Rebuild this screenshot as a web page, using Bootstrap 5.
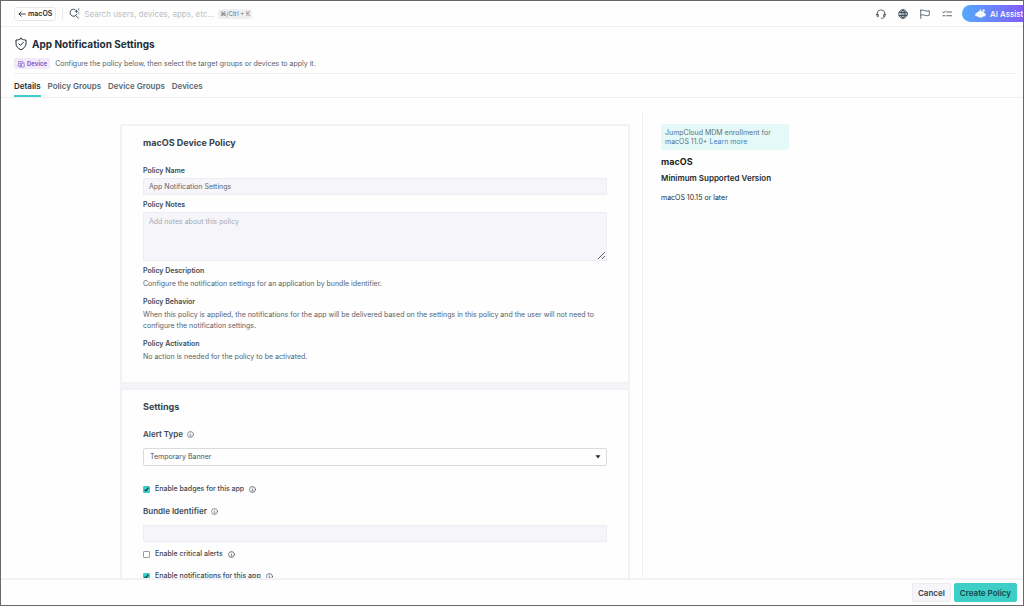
<!DOCTYPE html>
<html lang="en">
<head>
<meta charset="utf-8">
<meta name="viewport" content="width=device-width, initial-scale=1">
<title>App Notification Settings</title>
<link href="https://cdn.jsdelivr.net/npm/bootstrap@5.3.0/dist/css/bootstrap.min.css" rel="stylesheet">
<style>
  :root { --ink: #202d38; --body: #56626c; --strong: #3d4c57; --line: #efeff1; --field: #f5f5fa; --teal: #3dcec8; }
  body { font-family: Inter, sans-serif; font-size: 7px; line-height: 10px; color: var(--body); background: #fefefe; }
  svg { display: block; flex: none; fill: none; stroke: currentColor; stroke-linecap: round; stroke-linejoin: round; }
  .shell { height: 100vh; border: 1px solid #68686b; overflow: hidden; }

  .topbar { height: 26px; padding-left: 13px; border-bottom: 1px solid var(--line); color: var(--strong); }
  .back-btn { height: 14px; gap: 2px; padding: 0 3px; font-size: 7px; line-height: 10px; font-weight: 600; color: var(--ink); background: #fff; border: 1px solid #e6e7ea; border-radius: 3px; }
  .rule { width: 1px; height: 13px; margin: 0 6px; background: #e9e9ec; }
  .search-box { width: 130px; height: 14px; padding: 0; font-size: 8px; border: 0; background: transparent; color: var(--ink); outline: 0; }
  .search-box::placeholder { color: #b9bec3; opacity: 1; }
  .keys { padding: 0 2px; font: 6px/10px Inter, sans-serif; color: #68737c; background: #eeeff2; border-radius: 2px; }
  .tools { gap: 12px; margin-right: 10px; }
  .tool-btn { padding: 0; border: 0; background: none; color: var(--strong); }
  .ai-btn { height: 17px; width: 72px; margin-right: -11px; padding: 0 0 0 13px; font-size: 8px; line-height: 10px; font-weight: 500; color: #fff; border: 0; border-radius: 9px 0 0 9px; background: linear-gradient(90deg, #54a9fb, #7f62f8 80%); }

  .page-head { padding: 10px 6px 0 13px; }
  .page-title { font-size: 10px; line-height: 14px; font-weight: 700; color: var(--ink); }
  .device-tag { height: 11px; gap: 2px; padding: 0 3px; font-size: 6px; font-weight: 700; color: #8a5fc0; background: #f1eafb; border-radius: 2px; }
  .head-sub { gap: 5px; padding: 7px 0 4px; border-bottom: 1px solid var(--line); }
  .tab-bar { height: 24px; padding-left: 13px; gap: 7px; border-bottom: 1px solid var(--line); }
  .tab-bar .nav-link { padding: 7px 0 5px; font-size: 8px; line-height: 10px; font-weight: 600; color: #5a6771; border-bottom: 2px solid transparent; }
  .tab-bar .nav-link.active { color: var(--ink); border-color: var(--teal); }

  .scroller { min-height: 0; overflow-y: auto; scrollbar-width: none; }
  .scroller::-webkit-scrollbar { display: none; }
  .content { max-width: 784px; padding-top: 13px; }
  .panels { flex: 0 1 523px; padding: 13px 12px 0 0; border-right: 1px solid var(--line); }
  .stack { background: #f4f4f9; border-radius: 3px; }
  .panel { padding: 11px 21px 20px; background: #fefefe; border: 2px solid #f2f2f6; border-radius: 3px; }
  h2 { margin: 0; font-size: 9px; line-height: 12px; font-weight: 700; color: #34424d; }
  .label-s { display: block; margin: 0; font-size: 7px; line-height: 10px; font-weight: 600; color: var(--strong); }
  .label-m { font-size: 8px; line-height: 10px; font-weight: 600; color: var(--strong); }
  .form-control, .form-select { height: 17px; padding: 0 5px; font-size: 7px; line-height: 10px; color: #5a656e; background-color: var(--field); border: 1px solid #ececf1; border-radius: 1px; }
  textarea.form-control { height: 49px; min-height: 0; padding: 4px 5px; }
  .form-control::placeholder { color: #a4abb1; }
  .form-select { height: 18px; padding: 0 16px 0 6px; color: #47545e; border-color: #d9dbde; border-radius: 2px; background: #fefefe url("data:image/svg+xml,%3Csvg xmlns='http://www.w3.org/2000/svg' viewBox='0 0 6 4'%3E%3Cpath d='M.5.3h5L3 3.6z' fill='%23202d38'/%3E%3C/svg%3E") no-repeat right 5px center / 6px 4px; }
  .policy .form-control { margin: 2px 0 5px; }
  .policy .label-s:first-of-type { margin-top: 17px; }
  .policy dt.label-s:first-of-type { margin-top: 0; }
  .settings .form-select, .settings .form-control { margin-top: 9px; }
  .settings .form-select + .tick { margin-top: 18px; }
  .settings .tick + div { margin-top: 12px; }
  .settings .form-control + .tick { margin-top: 7px; }
  .tick { gap: 5px; height: 10px; font-size: 7px; font-weight: 500; color: #3b4852; }
  .tick .form-check-input { width: 7px; height: 7px; margin: 0; border: 1px solid #999fa4; border-radius: 1px; background-size: 7px 7px; background-position: center; }
  .tick .form-check-input:checked { border-color: var(--teal); background-color: var(--teal); background-image: url("data:image/svg+xml,%3Csvg xmlns='http://www.w3.org/2000/svg' viewBox='0 0 7 7'%3E%3Cpath d='M1.6 3.7l1.3 1.2 2.5-3.2' fill='none' stroke='%23163a40' stroke-width='1.2'/%3E%3C/svg%3E"); }
  dl, dd { margin: 0; }
  dd { line-height: 11px; padding-top: 2px; margin-bottom: 8px; }

  .aside { padding: 13px 0 0 18px; color: #26292c; }
  .notice { width: 128px; padding: 4px; line-height: 9px; color: #5d7078; background: #e5f9f9; border-radius: 3px; margin-bottom: 6px; }
  .notice a { color: #3b82bd; text-decoration: none; }
  .aside h2 { color: #1b1e21; }
  .version { margin: 5px 0 10px; }
  .foot { height: 27px; padding-right: 6px; gap: 3px; border-top: 2px solid #f2f2f5; }
  .foot .btn { height: 19px; padding: 0 5px; font-size: 8px; line-height: 10px; font-weight: 600; border-radius: 2px; border: 1px solid #ebebf0; color: #35434e; background: #f5f5fa; }
  .foot .btn.create { color: #17464f; background: var(--teal); border-color: var(--teal); }
</style>
</head>
<body>
<svg width="0" height="0" class="position-absolute" aria-hidden="true">
  <symbol id="info" viewBox="0 0 14 14"><circle cx="7" cy="7" r="6" stroke-width="1.300"/><path d="M6 6.500h1.200V10M5.600 10h3" stroke-width="1"/><circle cx="7" cy="4" r=".5" stroke-width=".5"/></symbol>
</svg>
<div class="shell d-flex flex-column">
  <header class="topbar d-flex align-items-center flex-shrink-0">
    <button class="back-btn d-flex align-items-center" type="button">
      <svg width="8" height="8" viewBox="0 0 16 16" stroke-width="1.800"><path d="M14.500 8H2M6.500 3.500L2 8l4.500 4.500"/></svg>macOS
    </button>
    <div class="rule"></div>
    <svg width="11" height="11" viewBox="0 0 22 22" stroke-width="1.900"><path d="M11.500 3A7 7 0 1 0 15.500 12.500M14 15.500l5 5"/><path d="M15 2l1.100 3.300L19.500 6.500l-3.400 1.200L15 11l-1.200-3.300L10.500 6.500l3.300-1.200z" fill="currentColor" stroke="none"/><path d="M19.500 1v3M19.500 9.500v2" stroke-width="1.300"/></svg>
    <input class="search-box ms-1" type="text" aria-label="Search" placeholder="Search users, devices, apps, etc...">
    <kbd class="keys ms-1">⌘/Ctrl + K</kbd>
    <div class="d-flex align-items-center ms-auto">
      <div class="tools d-flex align-items-center">
        <button class="tool-btn" type="button" aria-label="Support"><svg width="10" height="10" viewBox="0 0 20 20" stroke-width="1.600"><path d="M2.200 12V9.500a7.800 7.800 0 0 1 15.600 0V12M2 10.500h2.600v5H3.500A1.500 1.500 0 0 1 2 14v-3.500zM18 10.500h-2.600v5h1.100A1.500 1.500 0 0 0 18 14v-3.500zM16.500 15.500c0 2-1.500 3-4 3h-2"/></svg></button>
        <button class="tool-btn" type="button" aria-label="Language"><svg width="10" height="10" viewBox="0 0 20 20" stroke-width="1.900"><circle cx="10" cy="10" r="8.500"/><ellipse cx="10" cy="10" rx="4" ry="8.500"/><path d="M2.500 7h15M2.500 13h15M10 1.500v17"/></svg></button>
        <button class="tool-btn" type="button" aria-label="Announcements"><svg width="10" height="10" viewBox="0 0 20 20" stroke-width="1.600"><path d="M1.500 19V1.500M1.500 3c3.500-1.800 5.500-1 8.500.3s5 1.200 8.500 0v9.200c-3.500 1.300-5.500 1.200-8.500 0s-5-1.200-8.500 0"/></svg></button>
        <button class="tool-btn" type="button" aria-label="Tasks"><svg width="10" height="10" viewBox="0 0 20 20" stroke-width="1.700"><path d="M9.500 6h9.500M9.500 13.500h9.500M1.500 6L3.500 7.800 7 4M2 13.500h4"/></svg></button>
      </div>
      <button class="ai-btn d-flex align-items-center gap-1" type="button">
        <svg width="11" height="9" viewBox="0 0 22 18" stroke="none"><path fill="#fff" d="M10.500 4.500V1h1.200v3.500c3.300.2 5.600 1.700 6.300 4 2.300.2 3.500 1.500 3.500 3.200S20 14 17.500 14c-1.500 1.800-3.800 2.500-6.500 2.500S6 15.800 4.500 14C2 14 .5 13.500.5 11.700S1.700 8.700 4 8.500c.7-2.300 3.200-3.800 6.500-4zM17.500.5l.7 1.900 1.800.6-1.800.7-.7 1.800-.7-1.800L15 3l1.800-.6z"/><circle cx="8" cy="10.500" r="1.200" fill="#5b95fa"/><circle cx="14" cy="10.500" r="1.200" fill="#5b95fa"/></svg>AI Assist
      </button>
    </div>
  </header>

  <div class="page-head flex-shrink-0">
    <div class="d-flex align-items-center">
      <svg width="14" height="14" viewBox="0 0 28 28" stroke-width="2" style="color:#202d38"><path d="M14 3c3.500 2.500 6 3 10 3v7.500c0 5.500-4.500 9.500-10 12-5.500-2.500-10-6.500-10-12V6c4 0 6.500-.5 10-3z"/><path d="M10 13.800l3 3 5.500-6"/></svg>
      <h1 class="page-title ms-1 mb-0">App Notification Settings</h1>
    </div>
    <div class="head-sub d-flex align-items-center">
      <span class="device-tag d-inline-flex align-items-center"><svg width="8" height="8" viewBox="0 0 16 16" stroke-width="1.300"><path d="M3 9V3h8.500v2M1 11.500h6M9.500 6.500h5V14h-5zM5 6.500h2.500V14H5"/></svg>Device</span>
      <span>Configure the policy below, then select the target groups or devices to apply it.</span>
    </div>
  </div>
  <nav class="tab-bar nav flex-nowrap flex-shrink-0">
    <a class="nav-link active" href="#details">Details</a>
    <a class="nav-link" href="#policy-groups">Policy Groups</a>
    <a class="nav-link" href="#device-groups">Device Groups</a>
    <a class="nav-link" href="#devices">Devices</a>
  </nav>

  <main class="scroller flex-grow-1">
    <div class="content d-flex mx-auto">
      <div class="panels">
        <div class="stack d-flex flex-column gap-1">
          <section class="panel policy">
            <h2>macOS Device Policy</h2>
            <label class="label-s" for="pname">Policy Name</label>
            <input class="form-control" id="pname" value="App Notification Settings">
            <label class="label-s" for="pnotes">Policy Notes</label>
            <textarea class="form-control" id="pnotes" placeholder="Add notes about this policy"></textarea>
            <dl>
              <dt class="label-s">Policy Description</dt>
              <dd>Configure the notification settings for an application by bundle identifier.</dd>
              <dt class="label-s">Policy Behavior</dt>
              <dd>When this policy is applied, the notifications for the app will be delivered based on the settings in this policy and the user will not need to configure the notification settings.</dd>
              <dt class="label-s">Policy Activation</dt>
              <dd class="mb-0">No action is needed for the policy to be activated.</dd>
            </dl>
          </section>
          <section class="panel settings">
            <h2>Settings</h2>
            <div class="d-flex align-items-center gap-1 mt-3"><label class="label-m" for="alert">Alert Type</label><svg width="7" height="7"><use href="#info"/></svg></div>
            <select class="form-select" id="alert"><option>Temporary Banner</option><option>Alert</option><option>None</option></select>
            <div class="tick d-flex align-items-center"><input class="form-check-input" type="checkbox" id="badges" checked><label for="badges">Enable badges for this app</label><svg width="7" height="7"><use href="#info"/></svg></div>
            <div class="d-flex align-items-center gap-1"><label class="label-m" for="bundle">Bundle Identifier</label><svg width="7" height="7"><use href="#info"/></svg></div>
            <input class="form-control" id="bundle">
            <div class="tick d-flex align-items-center"><input class="form-check-input" type="checkbox" id="critical"><label for="critical">Enable critical alerts</label><svg width="7" height="7"><use href="#info"/></svg></div>
            <div class="tick d-flex align-items-center"><input class="form-check-input" type="checkbox" id="notif" checked><label for="notif">Enable notifications for this app</label><svg width="7" height="7"><use href="#info"/></svg></div>
          </section>
        </div>
      </div>
      <aside class="aside flex-grow-1">
        <div class="notice">JumpCloud MDM enrollment for<br>macOS 11.0+ <a href="#learn">Learn more</a></div>
        <h2>macOS</h2>
        <div class="version label-m text-reset">Minimum Supported Version</div>
        <div>macOS 10.15 or later</div>
      </aside>
    </div>
  </main>

  <footer class="foot d-flex align-items-center justify-content-end flex-shrink-0">
    <button class="btn" type="button">Cancel</button>
    <button class="btn create" type="button">Create Policy</button>
  </footer>
</div>
<script src="https://cdn.jsdelivr.net/npm/bootstrap@5.3.0/dist/js/bootstrap.bundle.min.js"></script>
</body>
</html>
